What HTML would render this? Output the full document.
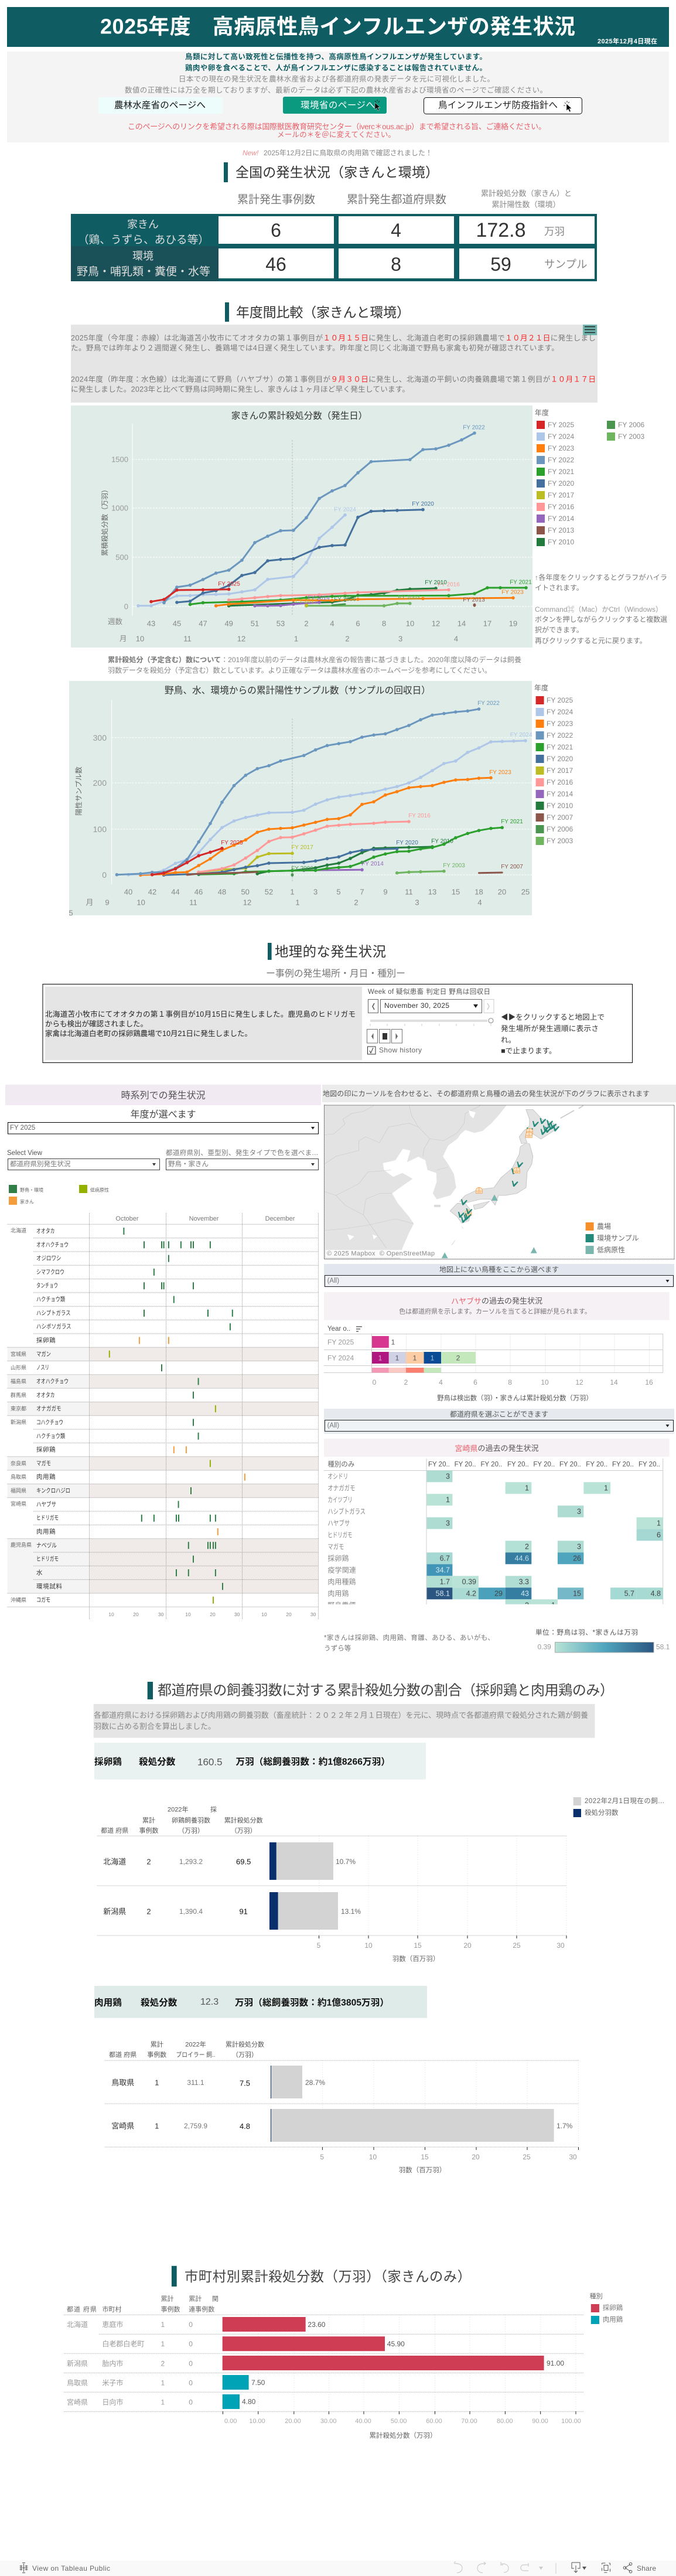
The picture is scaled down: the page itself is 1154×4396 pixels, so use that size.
<!DOCTYPE html>
<html lang="ja"><head><meta charset="utf-8"><title>2025年度 高病原性鳥インフルエンザの発生状況</title>
<style>
html,body{margin:0;padding:0;background:#fff}
svg{display:block}
text{font-family:"Liberation Sans","Noto Sans CJK JP",sans-serif;dominant-baseline:central;white-space:pre}
.m{text-anchor:middle}.e{text-anchor:end}.b{font-weight:700}
.l{fill:none;stroke-width:3;stroke-linejoin:round;stroke-linecap:round}
.grid{stroke:#fff;stroke-width:1;stroke-dasharray:3 2}
.dot{stroke:#999;stroke-width:1;stroke-dasharray:1 1;fill:none}
.lg{stroke:#ddd;stroke-width:1;stroke-dasharray:1 3;fill:none}
</style></head><body>
<svg xmlns="http://www.w3.org/2000/svg" width="1154" height="4396" viewBox="0 0 1154 4396">
<defs>
<marker id="r" markerUnits="userSpaceOnUse" markerWidth="8" markerHeight="8" refX="4" refY="4"><circle cx="4" cy="4" r="2.8" fill="#d62728"/></marker>
<marker id="lb" markerUnits="userSpaceOnUse" markerWidth="8" markerHeight="8" refX="4" refY="4"><circle cx="4" cy="4" r="2.8" fill="#aec7e8"/></marker>
<marker id="o" markerUnits="userSpaceOnUse" markerWidth="8" markerHeight="8" refX="4" refY="4"><circle cx="4" cy="4" r="2.8" fill="#ff7f0e"/></marker>
<marker id="bb" markerUnits="userSpaceOnUse" markerWidth="8" markerHeight="8" refX="4" refY="4"><circle cx="4" cy="4" r="2.8" fill="#6b97bf"/></marker>
<marker id="g" markerUnits="userSpaceOnUse" markerWidth="8" markerHeight="8" refX="4" refY="4"><circle cx="4" cy="4" r="2.8" fill="#2ca02c"/></marker>
<marker id="db" markerUnits="userSpaceOnUse" markerWidth="8" markerHeight="8" refX="4" refY="4"><circle cx="4" cy="4" r="2.8" fill="#44709d"/></marker>
<marker id="ol" markerUnits="userSpaceOnUse" markerWidth="8" markerHeight="8" refX="4" refY="4"><circle cx="4" cy="4" r="2.8" fill="#bcbd22"/></marker>
<marker id="p" markerUnits="userSpaceOnUse" markerWidth="8" markerHeight="8" refX="4" refY="4"><circle cx="4" cy="4" r="2.8" fill="#ff9896"/></marker>
<marker id="v" markerUnits="userSpaceOnUse" markerWidth="8" markerHeight="8" refX="4" refY="4"><circle cx="4" cy="4" r="2.8" fill="#9467bd"/></marker>
<marker id="dg" markerUnits="userSpaceOnUse" markerWidth="8" markerHeight="8" refX="4" refY="4"><circle cx="4" cy="4" r="2.8" fill="#237a3d"/></marker>
<marker id="lg" markerUnits="userSpaceOnUse" markerWidth="8" markerHeight="8" refX="4" refY="4"><circle cx="4" cy="4" r="2.8" fill="#6fb55f"/></marker>
<path id="bird" fill="#22897a" d="M-12,-16 L-7,-16 L-2,3 L12,-13 L16,-9 L-1,14 L-6,14Z"/>
<path id="barn" fill="#fbe3c8" stroke="#f28e2b" stroke-width="1.6" d="M-14,14V-2A14,14 0 0 1 14,-2V14ZM-14,3H14M-8,9H8M0,-15V3"/>
<path id="cur" fill="#000" stroke="#fff" stroke-width=".5" d="M0,0V12L3,9.2L5.2,14L7.2,13L5,8.4H9Z"/>
<clipPath id="heat"><rect x="553" y="2489" width="590" height="248.7"/></clipPath>
<clipPath id="bar3"><rect x="553" y="2276" width="590" height="66.5"/></clipPath>
<clipPath id="mapc"><rect x="9" y="139" width="1528" height="787"/></clipPath>
<linearGradient id="grad"><stop offset="0" stop-color="#b8e3d6"/><stop offset=".5" stop-color="#50a5be"/><stop offset="1" stop-color="#2b5681"/></linearGradient>
</defs>

<!-- HEADER -->
<rect x="12" y="12" width="1130" height="68" fill="#0f5c63"/>
<text x="171" y="45" font-size="36" font-weight="700" fill="#fff" textLength="811">2025年度　高病原性鳥インフルエンザの発生状況</text>
<text x="1020" y="71" font-size="11" font-weight="700" fill="#fff" textLength="102">2025年12月4日現在</text>

<rect x="12" y="88" width="1130" height="155" fill="#f4f4f4"/>
<g font-size="12.5">
<text x="316" y="97" class="b" fill="#0f5c63" textLength="515">鳥類に対して高い致死性と伝播性を持つ、高病原性鳥インフルエンザが発生しています。</text>
<text x="316" y="116" class="b" fill="#0f5c63" textLength="515">鶏肉や卵を食べることで、人が鳥インフルエンザに感染することは報告されていません。</text>
<text x="305" y="135" fill="#8a8a8a" textLength="539">日本での現在の発生状況を農林水産省および各都道府県の発表データを元に可視化しました。</text>
<text x="213" y="154" fill="#8a8a8a" textLength="721">数値の正確性には万全を期しておりますが、最新のデータは必ず下記の農林水産省および環境省のページでご確認ください。</text>
</g>
<rect x="168" y="166" width="213" height="28" rx="3" fill="#ecfdfb"/>
<text x="195" y="180" font-size="15.5" fill="#111" textLength="156">農林水産省のページへ</text>
<rect x="483" y="165" width="177" height="29" rx="3" fill="#0a9a80"/>
<text x="513" y="180" font-size="15.5" fill="#fff" textLength="127">環境省のページへ</text>
<use href="#cur" x="640" y="175"/>
<path d="M640,172l2,3M644,170v3M648,172l-2,3" stroke="#111" stroke-width=".8" fill="none"/>
<rect x="723.5" y="166.5" width="270" height="28" rx="4" fill="#fff" stroke="#111"/>
<text x="748" y="180" font-size="15.5" fill="#222" textLength="204">鳥インフルエンザ防疫指針へ</text>
<use href="#cur" x="967" y="177"/>
<path d="M964,175l2,2M968,172v3M962,180h3M972,174l-2,2" stroke="#111" stroke-width=".8" fill="none"/>
<text x="218" y="216" font-size="13" fill="#e8606a" textLength="714">このページへのリンクを希望される際は国際獣医教育研究センター（iverc＊ous.ac.jp）まで希望される旨、ご連絡ください。</text>
<text x="473" y="230" font-size="12.6" fill="#e8606a" textLength="202">メールの＊を＠に変えてください。</text>
<text x="414" y="261" font-size="12" fill="#f08a90" font-style="italic">New!</text>
<text x="450" y="261" font-size="12" fill="#888" textLength="288">2025年12月2日に鳥取県の肉用鶏で確認されました！</text>

<!-- NATIONAL -->
<rect x="382" y="277" width="7" height="34" fill="#0f5c63"/>
<text x="402" y="294" font-size="23" fill="#333" textLength="347">全国の発生状況（家きんと環境）</text>
<text x="405" y="341" font-size="19" fill="#777" textLength="133">累計発生事例数</text>
<text x="592" y="341" font-size="19" fill="#777" textLength="170">累計発生都道府県数</text>
<text x="821" y="330" font-size="13" fill="#888" textLength="155">累計殺処分数（家きん）と</text>
<text x="898" y="349" class="m" font-size="13" fill="#888">累計陽性数（環境）</text>
<rect x="121" y="365" width="898" height="115" fill="#0f5c63"/>
<rect x="121" y="420" width="252" height="60" fill="#1a5158"/>
<g fill="#fff">
<rect x="373" y="369" width="197" height="47"/><rect x="578" y="369" width="197" height="47"/><rect x="784" y="369" width="231" height="47"/>
<rect x="373" y="424" width="197" height="51"/><rect x="578" y="424" width="197" height="51"/><rect x="784" y="424" width="231" height="52"/>
</g>
<g fill="#ddd" class="m" font-size="18">
<text x="244" y="383" class="m">家きん</text>
<text x="245" y="409" class="m" font-size="18.7">（鶏、うずら、あひる等）</text>
<text x="244" y="437" class="m">環境</text>
<text x="245" y="464" class="m" font-size="19">野鳥・哺乳類・糞便・水等</text>
</g>
<g fill="#333" font-size="32">
<text x="471" y="393" class="m">6</text><text x="676" y="393" class="m">4</text>
<text x="855" y="393" class="m" font-size="34">172.8</text>
<text x="471" y="451" class="m">46</text><text x="676" y="451" class="m">8</text><text x="855" y="451" class="m">59</text>
</g>
<text x="929" y="395" font-size="17.5" fill="#888">万羽</text>
<text x="929" y="451" font-size="18.5" fill="#888">サンプル</text>

<!-- YEAR COMPARE -->
<rect x="384" y="516" width="7" height="33" fill="#0f5c63"/>
<text x="403" y="533" font-size="23" fill="#333" textLength="297">年度間比較（家きんと環境）</text>
<rect x="121" y="554" width="899" height="133" fill="#e5e5e5"/>
<rect x="995" y="554" width="24" height="18" fill="#6fb5ae"/>
<path d="M998,557.5h18M998,562.5h18M998,567.5h18" stroke="#222" stroke-width="1.6"/>
<g font-size="12.6" fill="#7a7a7a">
<text x="121" y="577" textLength="896">2025年度（今年度：赤線）は北海道苫小牧市にてオオタカの第１事例目が<tspan fill="#f22">１０月１５日</tspan>に発生し、北海道白老町の採卵鶏農場で<tspan fill="#f22">１０月２１日</tspan>に発生しまし</text>
<text x="121" y="594" textLength="833">た。野鳥では昨年より２週間遅く発生し、養鶏場では4日遅く発生しています。昨年度と同じく北海道で野鳥も家禽も初発が確認されています。</text>
<text x="121" y="647.5" textLength="896">2024年度（昨年度：水色線）は北海道にて野鳥（ハヤブサ）の第１事例目が<tspan fill="#f22">９月３０日</tspan>に発生し、北海道の平飼いの肉養鶏農場で第１例目が<tspan fill="#f22">１０月１７日</tspan></text>
<text x="121" y="664.5" textLength="578">に発生しました。2023年と比べて野鳥は同時期に発生し、家きんは１ヶ月ほど早く発生しています。</text>
</g>

<!-- CHART 1 -->
<rect x="121" y="692" width="788" height="413" fill="#dfece8"/>
<text x="511" y="710" class="m" font-size="15.5" fill="#333">家きんの累計殺処分数（発生日）</text>
<path d="M226,723V1051" stroke="#fff"/>
<path class="grid" d="M226,784H909M226,867H909M226,951H909"/>
<path class="grid" stroke-dasharray="1 2" d="M226,1035H909"/>
<path d="M499,751V1051" stroke="#bbb" stroke-dasharray="3 2"/>
<g font-size="13" fill="#999" class="e">
<text x="219" y="784" class="e">1500</text><text x="219" y="867" class="e">1000</text><text x="219" y="951" class="e">500</text><text x="219" y="1035" class="e">0</text>
</g>
<text transform="translate(179,889) rotate(-90)" class="m" font-size="12" fill="#666">累積殺処分数（万羽）</text>
<g font-size="13" fill="#888">
<text x="184" y="1061" font-size="12.5">週数</text><text x="204" y="1090" font-size="12.5">月</text>
<text x="258" y="1064" class="m">43</text><text x="302" y="1064" class="m">45</text><text x="346.5" y="1064" class="m">47</text><text x="390.7" y="1064" class="m">49</text><text x="435" y="1064" class="m">51</text><text x="479" y="1064" class="m">53</text><text x="523" y="1064" class="m">2</text><text x="567" y="1064" class="m">4</text><text x="611" y="1064" class="m">6</text><text x="655.6" y="1064" class="m">8</text><text x="700" y="1064" class="m">10</text><text x="744" y="1064" class="m">12</text><text x="788" y="1064" class="m">14</text><text x="832" y="1064" class="m">17</text><text x="876" y="1064" class="m">19</text>
<text x="239" y="1090" class="m">10</text><text x="320" y="1090" class="m">11</text><text x="412" y="1090" class="m">12</text><text x="505.5" y="1090" class="m">1</text><text x="593" y="1090" class="m">2</text><text x="683.6" y="1090" class="m">3</text><text x="778.5" y="1090" class="m">4</text>
</g>
<polyline class="l" stroke="#6fb55f" style="marker:url(#lg)" points="523,1033.8 655.6,1033.8 678,1029.8 699.8,1029.8"/>
<polyline class="l" stroke="#4a9650" points="567,1033 589,1031"/>
<polyline class="l" stroke="#237a3d" style="marker:url(#dg)" points="390.7,1033.8 501,1029.8 567,1027.5 589,1024 611,1016 633.5,1014.8 655.6,1012 678,1007.3 699.8,1005.3 744,1004"/>
<polyline class="l" stroke="#2ca02c" style="marker:url(#g)" points="324.5,1031.4 346.5,1028.6 413,1026.7 479,1024 523,1020 545,1018.8 567,1017.6 589,1016.8 766,1016.4 810,1013 832,1003 854,1003 898,1003"/>
<polyline class="l" stroke="#ff9896" style="marker:url(#p)" points="390.7,1024 413,1022 435,1020 457,1018 479,1016.4 545,1015 589,1012.4 611,1011 766,1006.5"/>
<polyline class="l" stroke="#ff7f0e" style="marker:url(#o)" points="368.7,1033.8 390.7,1031 501,1024 567,1024.7 611,1022.7 722,1021.5 876,1020.3"/>
<polyline class="l" stroke="#9467bd" style="marker:url(#v)" points="435,1033.8 457,1033.8 479,1033.4 501,1031 545,1027.9"/>
<polyline class="l" stroke="#aec7e8" style="marker:url(#lb)" points="236,1033.8 258,1033.8 280,1026 302,1016.8 324.5,1016.4 346.5,1014.8 368.7,1014.4 390.7,1013.6 413,1010 435,1006.5 457,988.7 501,983.6 523,960 545,918.7 567,899.7 589,878.8"/>
<polyline class="l" stroke="#44709d" style="marker:url(#db)" points="302,1028 324.5,1026 346.5,1012 368.7,1008 390.7,999 413,982 435,977 457,957 479,954.7 501,953.5 545,934 567,931 589,930 611,882.8 633.5,872.5 655.6,871.7 678,871 722,869.7"/>
<polyline class="l" stroke="#6b97bf" style="marker:url(#bb)" points="280,1028.6 302,1002 324.5,998.6 346.5,989 368.7,978 390.7,973 413,956 435,926 457,915 479,905.7 501,905 523,883.5 545,850.7 567,837.7 589,828.6 611,806.8 633.5,787.8 699.8,784.3 722,767.3 744,766 766,759.8 788,750.7 810,739"/>
<polyline class="l" stroke="#d62728" style="marker:url(#r)" points="258,1026.7 280,1023 302,1007 346.5,1006.5 390.7,1005.7"/>
<circle cx="523" cy="1033" r="3" fill="#bcbd22"/><ellipse cx="810" cy="1032.6" rx="2.5" ry="3" fill="#8c564b"/>
<g font-size="10" class="m">
<text x="809" y="730" class="m" fill="#6b97bf">FY 2022</text><text x="722" y="860.6" class="m" fill="#44709d">FY 2020</text><text x="589" y="870" class="m" fill="#aec7e8">FY 2024</text><text x="391" y="997" class="m" fill="#d62728">FY 2025</text><text x="766" y="998" class="m" fill="#ff9896">FY 2016</text><text x="744" y="994.6" class="m" fill="#237a3d">FY 2010</text><text x="889" y="994" class="m" fill="#2ca02c">FY 2021</text><text x="875" y="1011" class="m" fill="#ff7f0e">FY 2023</text><text x="809" y="1024" class="m" fill="#8c564b">FY 2013</text><text x="698" y="1020" class="m" fill="#6fb55f">FY 2003</text><text x="544" y="1021" class="m" fill="#9467bd">FY 2014</text><text x="589" y="1023" class="m" fill="#4a9650">FY 2006</text><text x="523" y="1026" class="m" fill="#bcbd22">FY 2017</text>
</g>
<text x="913" y="704.4" font-size="12" fill="#666">年度</text>
<g fill="#d62728"><rect x="916" y="718" width="14" height="14"/></g><rect x="916" y="738" width="14" height="14" fill="#aec7e8"/><rect x="916" y="758" width="14" height="14" fill="#ff7f0e"/><rect x="916" y="778" width="14" height="14" fill="#6b97bf"/><rect x="916" y="798" width="14" height="14" fill="#2ca02c"/><rect x="916" y="818" width="14" height="14" fill="#44709d"/><rect x="916" y="838" width="14" height="14" fill="#bcbd22"/><rect x="916" y="858" width="14" height="14" fill="#ff9896"/><rect x="916" y="878" width="14" height="14" fill="#9467bd"/><rect x="916" y="898" width="14" height="14" fill="#8c564b"/><rect x="916" y="918" width="14" height="14" fill="#237a3d"/>
<rect x="1036" y="718" width="14" height="14" fill="#4a9650"/><rect x="1036" y="738" width="14" height="14" fill="#6fb55f"/>
<g font-size="12" fill="#888">
<text x="935" y="725">FY 2025</text><text x="935" y="745">FY 2024</text><text x="935" y="765">FY 2023</text><text x="935" y="785">FY 2022</text><text x="935" y="805">FY 2021</text><text x="935" y="825">FY 2020</text><text x="935" y="845">FY 2017</text><text x="935" y="865">FY 2016</text><text x="935" y="885">FY 2014</text><text x="935" y="905">FY 2013</text><text x="935" y="925">FY 2010</text>
<text x="1055" y="725">FY 2006</text><text x="1055" y="745">FY 2003</text>
<text x="913" y="985.6" fill="#777" textLength="226">↑各年度をクリックするとグラフがハイラ</text><text x="913" y="1003" fill="#777">イトされます。</text>
<text x="913" y="1040" fill="#999" textLength="218">Command⌘（Mac）かCtrl（Windows）</text>
<text x="913" y="1057" fill="#777" textLength="226">ボタンを押しながらクリックすると複数選</text><text x="913" y="1075" fill="#777">択ができます。</text><text x="913" y="1093.6" fill="#777">再びクリックすると元に戻ります。</text>
</g>
<text x="184" y="1126" font-size="12.2" fill="#888" textLength="706"><tspan class="b" fill="#777">累計殺処分（予定含む）数について</tspan>：2019年度以前のデータは農林水産省の報告書に基づきました。2020年度以降のデータは飼養</text>
<text x="184" y="1144" font-size="12.2" fill="#888" textLength="655">羽数データを殺処分（予定含む）数としています。より正確なデータは農林水産省のホームページを参考にしてください。</text>

<!-- CHART 2 -->
<rect x="118" y="1162" width="790" height="400" fill="#dfece8"/>
<text x="508" y="1179" class="m" font-size="15.7" fill="#333">野鳥、水、環境からの累計陽性サンプル数（サンプルの回収日）</text>
<path d="M190.6,1194V1509" stroke="#fff"/>
<path class="grid" d="M190.6,1258.7H908M190.6,1336H908M190.6,1415H908"/>
<path class="grid" stroke-dasharray="1 2" d="M190.6,1493H908"/>
<path d="M499,1226V1506" stroke="#bbb" stroke-dasharray="3 2"/>
<g font-size="14" fill="#999">
<text x="182" y="1259" class="e">300</text><text x="182" y="1336" class="e">200</text><text x="182" y="1415" class="e">100</text><text x="182" y="1493" class="e">0</text>
</g>
<text transform="translate(134.7,1350) rotate(-90)" class="m" font-size="12" fill="#666">陽性サンプル数</text>
<g font-size="13" fill="#888">
<text x="219" y="1522" class="m">40</text><text x="260" y="1522" class="m">42</text><text x="299.5" y="1522" class="m">44</text><text x="339" y="1522" class="m">46</text><text x="379" y="1522" class="m">48</text><text x="418.7" y="1522" class="m">50</text><text x="459" y="1522" class="m">52</text><text x="499" y="1522" class="m">1</text><text x="538.6" y="1522" class="m">3</text><text x="578" y="1522" class="m">5</text><text x="618" y="1522" class="m">7</text><text x="658" y="1522" class="m">9</text><text x="698" y="1522" class="m">11</text><text x="738" y="1522" class="m">13</text><text x="778" y="1522" class="m">15</text><text x="817.5" y="1522" class="m">18</text><text x="857" y="1522" class="m">20</text><text x="897" y="1522" class="m">25</text>
<text x="153" y="1540" class="m">月</text><text x="183" y="1540" class="m">9</text><text x="240.6" y="1540" class="m">10</text><text x="330" y="1540" class="m">11</text><text x="422" y="1540" class="m">12</text><text x="508" y="1540" class="m">1</text><text x="608" y="1540" class="m">2</text><text x="712" y="1540" class="m">3</text><text x="819" y="1540" class="m">4</text>
<text x="121" y="1558" class="m">5</text>
</g>
<polyline class="l" stroke="#8c564b" points="817.5,1489.7 857.2,1489"/>
<polyline class="l" stroke="#6fb55f" style="marker:url(#lg)" points="677.7,1489.7 698,1488.3 718,1487.7 757.9,1486.7"/>
<polyline class="l" stroke="#9467bd" style="marker:url(#v)" points="518.7,1485.3 618,1484.3"/>
<polyline class="l" stroke="#237a3d" style="marker:url(#dg)" points="439.3,1491 459,1486.7 499,1485.7 538.6,1481 558.5,1476.3 578.3,1473 598,1465 618,1455 638,1447.7 657.8,1447 698,1446 738,1445"/>
<polyline class="l" stroke="#2ca02c" style="marker:url(#g)" points="339.2,1492.3 399.5,1491 419.4,1487.7 459,1486.7 499,1485.7 538.6,1485.3 558.5,1482 578.3,1480.3 598,1478.7 618,1471.7 638,1462.7 657.8,1457.3 677.7,1453.3 698,1452.7 718,1448.7 738,1446.3 757.9,1440.7 777.8,1429.7 798.3,1422.3 817.5,1417.3 838,1413.7 857.2,1412.3"/>
<polyline class="l" stroke="#bcbd22" style="marker:url(#ol)" points="339.2,1488.3 379,1484 419.4,1481.7 439.3,1462.7 459,1456.7 499,1456.3"/>
<polyline class="l" stroke="#44709d" style="marker:url(#db)" points="279.6,1493.3 339.2,1491.3 379,1488.3 399.5,1484 419.4,1480 439.3,1477.3 459,1473 518.7,1471.7 538.6,1469.3 558.5,1465.3 578.3,1462.3 598,1455 618,1451 638,1449.7 677.7,1448.3"/>
<polyline class="l" stroke="#ff9896" style="marker:url(#p)" points="339.2,1488.3 379,1482.3 399.5,1476 419.4,1464.3 439.3,1451.3 459,1436 479,1429.3 499,1428.7 518.7,1423 538.6,1416.7 558.5,1410 578.3,1408.3 598,1406.7 638,1405 657.8,1403 698,1402"/>
<polyline class="l" stroke="#ff7f0e" style="marker:url(#o)" points="239.9,1493.3 279.6,1491.7 299.5,1489 319.3,1488.3 339.2,1477 359,1465.7 379,1451 399.5,1442.3 419.4,1433.3 439.3,1420.3 459,1415 479,1413.7 499,1412.7 518.7,1408 538.6,1403.3 558.5,1398.3 578.3,1397 598,1390.7 618,1372.7 638,1368.3 657.8,1356.7 677.7,1351 698,1344.3 718,1342.3 738,1340.7 757.9,1335 777.8,1331 798.3,1330.3 817.5,1328 838,1327.3"/>
<polyline class="l" stroke="#aec7e8" style="marker:url(#lb)" points="219.3,1492.7 259.7,1490.7 279.6,1485 299.5,1473.3 319.3,1466.7 339.2,1455 359,1432.7 379,1412.3 399.5,1401 419.4,1395 439.3,1391 459,1387 499,1386.3 518.7,1382.7 538.6,1372.3 558.5,1365 578.3,1360.3 598,1357.7 618,1354.3 638,1351.7 657.8,1346.7 677.7,1342.3 698,1336 718,1326.7 738,1315 757.9,1303 777.8,1298.7 798.3,1284 817.5,1276.3 838,1266 857.2,1265.3 877,1264.7 897,1264"/>
<polyline class="l" stroke="#6b97bf" style="marker:url(#bb)" points="199.4,1492.7 239.9,1491 259.7,1488.7 279.6,1488.3 299.5,1481.7 319.3,1466.7 339.2,1436.7 359,1405.3 379,1369 399.5,1340.7 419.4,1323 439.3,1311.7 459,1306.7 479,1298.7 518.7,1289.3 538.6,1279.7 558.5,1272.3 578.3,1269 598,1265.7 618,1258 638,1254.3 657.8,1252.3 677.7,1245 698,1238 718,1228.3 738,1220.3 757.9,1217.7 777.8,1215 798.3,1213.3 817.5,1210"/>
<polyline class="l" stroke="#d62728" style="marker:url(#r)" points="259.7,1492.7 279.6,1490 299.5,1482.7 319.3,1472 339.2,1460.3 359,1454.3 379,1447.7"/>
<polyline class="l" stroke="#8c564b" points="319.3,1493 339.2,1491 419.4,1489 439.3,1488"/>
<ellipse cx="499" cy="1493" rx="2.5" ry="3" fill="#4a9650"/>
<g font-size="10">
<text x="834" y="1200.7" class="m" fill="#6b97bf">FY 2022</text><text x="889.6" y="1254.7" class="m" fill="#aec7e8">FY 2024</text><text x="854" y="1318.7" class="m" fill="#ff7f0e">FY 2023</text><text x="716" y="1392.7" class="m" fill="#ff9896">FY 2016</text><text x="874" y="1402.7" class="m" fill="#2ca02c">FY 2021</text><text x="396" y="1438.7" class="m" fill="#d62728">FY 2025</text><text x="516" y="1446.7" class="m" fill="#bcbd22">FY 2017</text><text x="695" y="1438.7" class="m" fill="#44709d">FY 2020</text><text x="755" y="1436" class="m" fill="#237a3d">FY 2010</text><text x="636" y="1474.7" class="m" fill="#9467bd">FY 2014</text><text x="775" y="1477.7" class="m" fill="#6fb55f">FY 2003</text><text x="874" y="1479.7" class="m" fill="#8c564b">FY 2007</text><text x="516" y="1482.7" class="m" fill="#4a9650">FY 2006</text>
</g>
<text x="912" y="1174" font-size="12" fill="#666">年度</text>
<rect x="914.6" y="1188" width="14" height="14" fill="#d62728"/><rect x="914.6" y="1208" width="14" height="14" fill="#aec7e8"/><rect x="914.6" y="1228" width="14" height="14" fill="#ff7f0e"/><rect x="914.6" y="1248" width="14" height="14" fill="#6b97bf"/><rect x="914.6" y="1268" width="14" height="14" fill="#2ca02c"/><rect x="914.6" y="1288" width="14" height="14" fill="#44709d"/><rect x="914.6" y="1308" width="14" height="14" fill="#bcbd22"/><rect x="914.6" y="1328" width="14" height="14" fill="#ff9896"/><rect x="914.6" y="1348" width="14" height="14" fill="#9467bd"/><rect x="914.6" y="1368" width="14" height="14" fill="#237a3d"/><rect x="914.6" y="1388" width="14" height="14" fill="#8c564b"/><rect x="914.6" y="1408" width="14" height="14" fill="#4a9650"/><rect x="914.6" y="1428" width="14" height="14" fill="#6fb55f"/>
<g font-size="12" fill="#888">
<text x="933" y="1195">FY 2025</text><text x="933" y="1215">FY 2024</text><text x="933" y="1235">FY 2023</text><text x="933" y="1255">FY 2022</text><text x="933" y="1275">FY 2021</text><text x="933" y="1295">FY 2020</text><text x="933" y="1315">FY 2017</text><text x="933" y="1335">FY 2016</text><text x="933" y="1355">FY 2014</text><text x="933" y="1375">FY 2010</text><text x="933" y="1395">FY 2007</text><text x="933" y="1415">FY 2006</text><text x="933" y="1435">FY 2003</text>
</g>

<!-- GEO -->
<rect x="457" y="1609" width="6.6" height="29" fill="#0f5c63"/>
<text x="469" y="1624" font-size="23.5" fill="#333" textLength="190">地理的な発生状況</text>
<text x="454" y="1662" font-size="16" fill="#777" textLength="238">ー事例の発生場所・月日・種別ー</text>
<rect x="73" y="1679.5" width="1006.5" height="134" fill="#fff" stroke="#000"/>
<rect x="77" y="1684" width="541" height="125" fill="#e5e5e5"/>
<g font-size="12.5" fill="#222">
<text x="77" y="1731" textLength="530">北海道苫小牧市にてオオタカの第１事例目が10月15日に発生しました。鹿児島のヒドリガモ</text>
<text x="77" y="1747.7">からも検出が確認されました。</text>
<text x="77" y="1764" textLength="353">家禽は北海道白老町の採卵鶏農場で10月21日に発生しました。</text>
</g>
<text x="628" y="1693" font-size="11.5" fill="#555" textLength="209">Week of 疑似患畜 判定日 野鳥は回収日</text>
<rect x="628.5" y="1705.5" width="17" height="23" fill="#fff" stroke="#666"/><path d="M639,1712l-3,5.5l3,5.5" fill="none" stroke="#555" stroke-width="1.5"/>
<rect x="649.5" y="1705.5" width="173" height="23" fill="#fff" stroke="#666"/>
<text x="656" y="1716" font-size="12" fill="#333" textLength="111">November 30, 2025</text><path d="M808,1714h8l-4,6z" fill="#222"/>
<rect x="826" y="1705.5" width="17" height="23" fill="#fff" stroke="#ccc"/><path d="M832,1712l3,5.5l-3,5.5" fill="none" stroke="#ccc" stroke-width="1.5"/>
<rect x="632" y="1740" width="200" height="4" fill="#e0e0e0"/><circle cx="838" cy="1741.7" r="4" fill="#fff" stroke="#888"/>
<path d="M632,1747v4M661,1747v4M691,1747v4M720,1747v4M750,1747v4M779,1747v4M809,1747v4M838,1747v4" stroke="#ccc"/>
<rect x="626.5" y="1756.5" width="18" height="23.5" fill="#fff" stroke="#777"/><path d="M637.5,1763v11l-3.5,-5.5z" fill="#666"/>
<rect x="647.5" y="1756.5" width="18.5" height="23.5" fill="#fff" stroke="#777"/><rect x="653" y="1763" width="8" height="11" fill="#333"/>
<rect x="668.5" y="1756.5" width="18" height="23.5" fill="#fff" stroke="#777"/><path d="M675.5,1763v11l3.5,-5.5z" fill="#666"/>
<rect x="627.5" y="1786" width="13.5" height="13" fill="#fff" stroke="#333"/><path d="M631,1793l2,4l4,-9" fill="none" stroke="#333"/>
<text x="647" y="1792" font-size="12" fill="#666" textLength="73">Show history</text>
<g font-size="12.6" fill="#333">
<text x="855" y="1736" textLength="177">◀▶をクリックすると地図上で</text>
<text x="855" y="1755.7" textLength="167">発生場所が発生週順に表示さ</text>
<text x="855" y="1775">れ。</text>
<text x="855" y="1793.7">■で止まります。</text>
</g>

<!-- TIME SERIES -->
<rect x="9" y="1851" width="539" height="35" fill="#f1eaf2"/>
<text x="278.6" y="1870" class="m" font-size="16" fill="#555">時系列での発生状況</text>
<text x="278.6" y="1902.7" class="m" font-size="16" fill="#444">年度が選べます</text>
<rect x="13.5" y="1915.5" width="530" height="19.5" fill="#fff" stroke="#000"/>
<text x="17" y="1925" font-size="11.5" fill="#666">FY 2025</text><path d="M531,1923h6l-3,4.5z" fill="#222"/>
<text x="12" y="1968" font-size="11.5" fill="#555">Select View</text>
<text x="283" y="1968" font-size="11.5" fill="#777" textLength="260">都道府県別、亜型別、発生タイプで色を選べま...</text>
<rect x="13.5" y="1977.5" width="259" height="19" fill="#fff" stroke="#444"/>
<text x="17" y="1987" font-size="11.5" fill="#777">都道府県別発生状況</text><path d="M260,1985h6l-3,4.5z" fill="#333"/>
<rect x="283.5" y="1977.5" width="260" height="19" fill="#fff" stroke="#444"/>
<text x="287" y="1987" font-size="11.5" fill="#777">野鳥・家きん</text><path d="M531,1985h6l-3,4.5z" fill="#333"/>
<rect x="15" y="2022" width="14" height="14" fill="#2f7f47"/><text x="34" y="2031" font-size="8" fill="#666">野鳥・環境</text>
<rect x="135" y="2022" width="14" height="14" fill="#93b200"/><text x="154" y="2031" font-size="8" fill="#666">低病原性</text>
<rect x="15" y="2042" width="14" height="14" fill="#f59c3c"/><text x="34" y="2051" font-size="8" fill="#666">家きん</text>
<g fill="#f4f4f4"><rect x="12.5" y="2299.2" width="140" height="23.3"/><rect x="12.5" y="2345.8" width="140" height="23.3"/><rect x="12.5" y="2392.5" width="140" height="23.3"/><rect x="12.5" y="2485.7" width="140" height="23.3"/><rect x="12.5" y="2532.4" width="140" height="23.3"/><rect x="12.5" y="2625.7" width="140" height="93.3"/></g>
<g fill="#f0ebe9"><rect x="152.5" y="2299.2" width="391" height="23.3"/><rect x="152.5" y="2345.8" width="391" height="23.3"/><rect x="152.5" y="2392.5" width="391" height="23.3"/><rect x="152.5" y="2485.7" width="391" height="23.3"/><rect x="152.5" y="2532.4" width="391" height="23.3"/><rect x="152.5" y="2625.7" width="391" height="93.3"/></g>
<text x="217" y="2080" class="m" font-size="11" fill="#777">October</text><text x="348" y="2080" class="m" font-size="11" fill="#777">November</text><text x="478" y="2080" class="m" font-size="11" fill="#777">December</text>
<path class="dot" d="M152.5,2070V2763M283.6,2070V2763M413.6,2070V2763M543.6,2070V2763"/>
<path class="dot" d="M12.5,2089.3H543.6M57,2112.6H543.6M57,2135.9H543.6M57,2159.3H543.6M57,2182.6H543.6M57,2205.9H543.6M57,2229.2H543.6M57,2252.5H543.6M57,2275.9H543.6M12.5,2299.2H543.6M12.5,2322.5H543.6M12.5,2345.8H543.6M12.5,2369.1H543.6M12.5,2392.5H543.6M12.5,2415.8H543.6M57,2439.1H543.6M57,2462.4H543.6M12.5,2485.7H543.6M12.5,2509H543.6M12.5,2532.4H543.6M12.5,2555.7H543.6M57,2579H543.6M57,2602.3H543.6M12.5,2625.7H543.6M57,2649H543.6M57,2672.3H543.6M57,2695.6H543.6M12.5,2719H543.6M12.5,2742.3H543.6"/>
<g fill="#666" font-size="9">
<text x="18" y="2100">北海道</text><text x="18" y="2310.8">宮城県</text><text x="18" y="2334">山形県</text><text x="18" y="2357.5">福島県</text><text x="18" y="2380.8">群馬県</text><text x="18" y="2404">東京都</text><text x="18" y="2427">新潟県</text><text x="18" y="2497.4">奈良県</text><text x="18" y="2520.7">鳥取県</text><text x="18" y="2544">福岡県</text><text x="18" y="2566.5">宮崎県</text><text x="18" y="2636.5">鹿児島県</text><text x="18" y="2730.6">沖縄県</text>
</g>
<g fill="#333" font-size="10.5">
<text x="62" y="2101" textLength="31.5" lengthAdjust="spacingAndGlyphs">オオタカ</text>
<text x="62" y="2124.3" textLength="55" lengthAdjust="spacingAndGlyphs">オオハクチョウ</text>
<text x="62" y="2147.6" textLength="42.5" lengthAdjust="spacingAndGlyphs">オジロワシ</text>
<text x="62" y="2170.9" textLength="48" lengthAdjust="spacingAndGlyphs">シマフクロウ</text>
<text x="62" y="2194.2" textLength="37" lengthAdjust="spacingAndGlyphs">タンチョウ</text>
<text x="62" y="2217.6" textLength="49" lengthAdjust="spacingAndGlyphs">ハクチョウ類</text>
<text x="62" y="2240.9" textLength="58.5" lengthAdjust="spacingAndGlyphs">ハシブトガラス</text>
<text x="62" y="2264.2" textLength="59.6" lengthAdjust="spacingAndGlyphs">ハシボソガラス</text>
<text x="62" y="2287.5" textLength="32.5">採卵鶏</text>
<text x="62" y="2310.8" textLength="25" lengthAdjust="spacingAndGlyphs">マガン</text>
<text x="62" y="2334.2" textLength="22" lengthAdjust="spacingAndGlyphs">ノスリ</text>
<text x="62" y="2357.5" textLength="55" lengthAdjust="spacingAndGlyphs">オオハクチョウ</text>
<text x="62" y="2380.8" textLength="31.5" lengthAdjust="spacingAndGlyphs">オオタカ</text>
<text x="62" y="2404.1" textLength="42.5" lengthAdjust="spacingAndGlyphs">オナガガモ</text>
<text x="62" y="2427.4" textLength="46" lengthAdjust="spacingAndGlyphs">コハクチョウ</text>
<text x="62" y="2450.8" textLength="49" lengthAdjust="spacingAndGlyphs">ハクチョウ類</text>
<text x="62" y="2474.1" textLength="32.5">採卵鶏</text>
<text x="62" y="2497.4" textLength="25" lengthAdjust="spacingAndGlyphs">マガモ</text>
<text x="62" y="2520.7" textLength="32.5">肉用鶏</text>
<text x="62" y="2544" textLength="58" lengthAdjust="spacingAndGlyphs">キンクロハジロ</text>
<text x="62" y="2567.4" textLength="34" lengthAdjust="spacingAndGlyphs">ハヤブサ</text>
<text x="62" y="2590.7" textLength="38" lengthAdjust="spacingAndGlyphs">ヒドリガモ</text>
<text x="62" y="2614" textLength="32.5">肉用鶏</text>
<text x="62" y="2637.3" textLength="35" lengthAdjust="spacingAndGlyphs">ナベヅル</text>
<text x="62" y="2660.6" textLength="38" lengthAdjust="spacingAndGlyphs">ヒドリガモ</text>
<text x="62" y="2684">水</text>
<text x="62" y="2707.3" textLength="44">環境試料</text>
<text x="62" y="2730.6" textLength="24" lengthAdjust="spacingAndGlyphs">コガモ</text>
</g>
<path fill="none" stroke="#2f7f47" stroke-width="2" d="M211.4,2095v12M246,2118.3v12M276,2118.3v12M279.6,2118.3v12M287.9,2118.3v12M308.9,2118.3v12M326,2118.3v12M330,2118.3v12M358.9,2118.3v12M287.9,2141.6v12M262.9,2164.9v12M246,2188.2v12M276,2188.2v12M279.6,2188.2v12M330,2188.2v12M296.8,2211.6v12M246,2234.9v12M355,2234.9v12M396.8,2234.9v12M392.9,2258.2v12M276,2328.2v12M338.6,2351.5v12M330,2374.8v12M330,2421.4v12M338.6,2444.8v12M326,2538v12M304.6,2561.4v12M241.8,2584.7v12M262.9,2584.7v12M301,2584.7v12M305,2584.7v12M358.9,2584.7v12M367.9,2584.7v12M321.8,2631.3v12M355,2631.3v12M358.9,2631.3v12M364,2631.3v12M367.9,2631.3v12M330,2654.6v12M301,2678v12M321.8,2678v12M367.9,2678v12M380,2701.3v12"/>
<path fill="none" stroke="#f59c3c" stroke-width="2" d="M237.9,2281.5v12M287.9,2281.5v12M296.8,2468.1v12M317.9,2468.1v12M417.9,2514.7v12M371.8,2608v12"/>
<path fill="none" stroke="#93b200" stroke-width="2" d="M186.8,2304.8v12M367.9,2398.1v12M358.9,2491.4v12M364,2724.6v12"/>
<g font-size="8.5" fill="#888">
<text x="190" y="2755" class="m">10</text><text x="232" y="2755" class="m">20</text><text x="274.6" y="2755" class="m">30</text><text x="321" y="2755" class="m">10</text><text x="363" y="2755" class="m">20</text><text x="404.6" y="2755" class="m">30</text><text x="451" y="2755" class="m">10</text><text x="493" y="2755" class="m">20</text><text x="534.6" y="2755" class="m">30</text>
</g>

<!-- MAP -->
<rect x="550" y="1851" width="604" height="30" fill="#ebebeb"/>
<text x="551" y="1866.7" font-size="12" fill="#555" textLength="558">地図の印にカーソルを合わせると、その都道府県と鳥種の過去の発生状況が下のグラフに表示されます</text>
<g transform="translate(550,1840) scale(.391,.3333)">
<g clip-path="url(#mapc)">
<path fill="#e3e3e3" d="M9,139H805L770,190L740,230L700,270L665,280L625,265L605,285L590,310L550,345L527,400L550,440L575,490L585,560L560,600L500,620L483,590L500,530L498,485L460,470L450,420L420,402L370,430L385,370L352,362L320,420L265,435L270,470L310,505L350,485L395,515L340,560L305,590L330,640L380,710L400,745L380,790L350,870L340,926H9Z"/>
<path fill="#e3e3e3" stroke="#bbb" stroke-width="2" d="M890,160L920,160L960,210L1010,230L1030,250L1010,270L955,312L920,285L885,300L895,330L870,335L860,300L880,270L905,245L905,210Z"/>
<path fill="#e3e3e3" stroke="#bbb" stroke-width="2" d="M885,335L905,335L920,400L915,440L895,480L890,560L850,590L800,600L770,600L755,650L735,620L690,620L620,640L600,630L625,600L680,570L750,560L780,510L830,460L860,390L865,350Z"/>
<path fill="#e3e3e3" stroke="#bbb" stroke-width="2" d="M660,650L730,630L700,662L665,672Z"/>
<path fill="#e3e3e3" stroke="#bbb" stroke-width="2" d="M590,640L625,642L652,680L640,730L610,742L590,710L558,680Z"/>
<path d="M1040,205L1100,165M1120,155L1140,140" stroke="#ccc" stroke-width="5" fill="none"/>
<path d="M490,650h25v8h-25zM610,760l5,10M580,830l-15,25" stroke="#ccc" stroke-width="2" fill="#ddd"/>
<path fill="none" stroke="#ccc" stroke-width="2" d="M9,290L50,285L100,235L90,210L130,180L180,170L225,140M380,140L390,190L420,250L470,310L445,360L440,400M470,310L530,320L590,280L620,230L625,180L690,140M9,440L60,400L160,370L160,320L190,300L250,330L290,250L380,230L420,250M9,580L60,600L160,540L200,480L300,470M60,600L100,650L180,700L190,620L250,590L305,590M180,700L210,750L320,720L400,745M9,780L100,770L210,750L280,870M500,470L550,455"/>
<path fill="#fff" d="M640,165L670,175L660,205L645,190ZM110,800L140,810L120,830ZM220,800L240,810L225,825Z"/>
</g>
<use href="#bird" x="905" y="268"/><use href="#bird" x="930" y="235"/><use href="#bird" x="962" y="220"/><use href="#bird" x="992" y="230"/><use href="#bird" x="965" y="276"/><use href="#bird" x="985" y="265"/><use href="#bird" x="1000" y="250"/><use href="#bird" x="1020" y="258"/><use href="#bird" x="1008" y="245"/><use href="#bird" x="976" y="258"/>
<use href="#barn" x="905" y="272"/><use href="#barn" x="903" y="290"/>
<use href="#bird" x="862" y="443"/><use href="#bird" x="838" y="477"/><use href="#barn" x="849" y="472"/><use href="#bird" x="840" y="541"/>
<use href="#barn" x="685" y="575"/>
<use href="#bird" x="618" y="636"/><use href="#barn" x="638" y="690"/><use href="#bird" x="640" y="682"/><use href="#bird" x="605" y="700"/><use href="#bird" x="630" y="714"/><use href="#bird" x="618" y="726"/><use href="#bird" x="636" y="708"/>
<path fill="#7ab6ae" d="M752,595L767,627H738ZM535,892L549,922H521ZM924,865L938,896H910Z"/>
</g>
<rect x="553.5" y="1886" width="597.5" height="262.7" fill="none" stroke="#111" stroke-dasharray="1 1"/>
<rect x="556" y="2133" width="188" height="13" fill="#fff" opacity=".85"/>
<text x="558" y="2139.5" font-size="11" fill="#888" textLength="184">© 2025 Mapbox  © OpenStreetMap</text>
<rect x="999.6" y="2086" width="14" height="14" fill="#f58f2c"/><rect x="999.6" y="2106" width="14" height="14" fill="#22897a"/><rect x="999.6" y="2126" width="14" height="14" fill="#7ab6ae"/>
<g font-size="12" fill="#666"><text x="1019" y="2093">農場</text><text x="1019" y="2113">環境サンプル</text><text x="1019" y="2133">低病原性</text></g>

<rect x="553" y="2157" width="598" height="40" fill="#e2e6ef"/>
<text x="852" y="2166.7" class="m" font-size="12" fill="#555">地図上にない鳥種をここから選べます</text>
<rect x="554.5" y="2176.5" width="595" height="19" fill="#f0f1f6" stroke="#222"/>
<text x="558.6" y="2186" font-size="11.5" fill="#777">(All)</text><path d="M1136.5,2184h6l-3,4.5z" fill="#222"/>
<rect x="553" y="2205" width="589.6" height="47.7" fill="#f6f1f5"/>
<text x="848" y="2220" class="m" font-size="13" fill="#555"><tspan fill="#e8606a">ハヤブサ</tspan>の過去の発生状況</text>
<text x="845" y="2238.7" class="m" font-size="11" fill="#777">色は都道府県を示します。カーソルを当てると詳細が見られます。</text>
<text x="559" y="2268" font-size="11.5" fill="#555">Year o..</text>
<path d="M608,2264h10M608,2268h7M608,2272h4" stroke="#666" stroke-width="1.4"/>
<path d="M693.5,2276V2342M753,2276V2342M812,2276V2342M871,2276V2342M931,2276V2342M990,2276V2342M1049,2276V2342M1108.6,2276V2342" stroke="#eee"/>
<path d="M553,2276.5H1131.7M553,2303.5H1131.7M553,2330.5H1131.7M553,2342.5H1131.7M634.5,2276V2342.5M1131.7,2276V2342.5" stroke="#ccc"/>
<text x="559" y="2290.7" font-size="12" fill="#999">FY 2025</text><text x="559" y="2317.7" font-size="12" fill="#999">FY 2024</text>
<rect x="635" y="2280" width="28.8" height="20" fill="#d83790"/><text x="671" y="2290.5" class="m" font-size="12" fill="#555">1</text>
<rect x="635" y="2307" width="28.8" height="20" fill="#b01680"/><rect x="663.8" y="2307" width="29.2" height="20" fill="#d1d1e6"/><rect x="693" y="2307" width="30.6" height="20" fill="#fccda5"/><rect x="723.6" y="2307" width="29.4" height="20" fill="#0b4a94"/><rect x="753" y="2307" width="59" height="20" fill="#c4e8bc"/>
<g font-size="12" class="m"><text x="649" y="2317.5" class="m" fill="#e0b0d8">1</text><text x="678" y="2317.5" class="m" fill="#555">1</text><text x="708" y="2317.5" class="m" fill="#555">1</text><text x="738" y="2317.5" class="m" fill="#a8c4e0">1</text><text x="782" y="2317.5" class="m" fill="#555">2</text></g>
<g clip-path="url(#bar3)"><rect x="635" y="2334" width="28.8" height="20" fill="#f598b5"/><rect x="663.8" y="2334" width="29.2" height="20" fill="#fccac5"/><rect x="693" y="2334" width="30.6" height="20" fill="#fb7f6f"/><rect x="723.6" y="2334" width="29.4" height="20" fill="#c4e8bc"/></g>
<g font-size="12" fill="#999"><text x="639" y="2359" class="m">0</text><text x="693" y="2359" class="m">2</text><text x="752.5" y="2359" class="m">4</text><text x="811.5" y="2359" class="m">6</text><text x="870.6" y="2359" class="m">8</text><text x="930" y="2359" class="m">10</text><text x="989" y="2359" class="m">12</text><text x="1048" y="2359" class="m">14</text><text x="1108" y="2359" class="m">16</text></g>
<text x="879" y="2386.7" class="m" font-size="11.3" fill="#555">野鳥は検出数（羽）・家きんは累計殺処分数（万羽）</text>

<rect x="553" y="2404" width="598" height="42.7" fill="#e6eaee"/>
<text x="852" y="2413.3" class="m" font-size="12" fill="#555">都道府県を選ぶことができます</text>
<rect x="554.5" y="2423.5" width="595" height="19" fill="#f0f3f6" stroke="#222"/>
<text x="558.6" y="2433" font-size="11.5" fill="#777">(All)</text><path d="M1136.5,2431h6l-3,4.5z" fill="#222"/>
<rect x="553" y="2455" width="589.6" height="31" fill="#f6f1f5"/>
<text x="848" y="2471.3" class="m" font-size="13" fill="#555"><tspan fill="#e8606a">宮崎県</tspan>の過去の発生状況</text>
<text x="559.4" y="2499.7" font-size="11.5" fill="#666">種別のみ</text>
<g font-size="11.5" fill="#555"><text x="731" y="2499.7">FY 20..</text><text x="775.6" y="2499.7">FY 20..</text><text x="820.5" y="2499.7">FY 20..</text><text x="866" y="2499.7">FY 20..</text><text x="910.4" y="2499.7">FY 20..</text><text x="955" y="2499.7">FY 20..</text><text x="1000.3" y="2499.7">FY 20..</text><text x="1045" y="2499.7">FY 20..</text><text x="1090" y="2499.7">FY 20..</text></g>
<path d="M553,2509.5H1131.7M728,2489V2737.7M1131.7,2489V2737.7" stroke="#ccc"/>
<g clip-path="url(#heat)">
<rect x="728.6" y="2509.3" width="43.8" height="20" fill="#aedcd2"/>
<rect x="862.7" y="2529.3" width="44.6" height="20" fill="#b8e3d6"/><rect x="996.4" y="2529.3" width="45.7" height="20" fill="#b8e3d6"/>
<rect x="728.6" y="2549.3" width="43.8" height="20" fill="#b8e3d6"/>
<rect x="951.9" y="2569.3" width="44.5" height="20" fill="#aedcd2"/>
<rect x="728.6" y="2589.3" width="43.8" height="20" fill="#aedcd2"/><rect x="1086.7" y="2589.3" width="45" height="20" fill="#b8e3d6"/>
<rect x="1086.7" y="2609.3" width="45" height="20" fill="#a5d8d2"/>
<rect x="862.7" y="2629.3" width="44.6" height="20" fill="#b4e1d5"/><rect x="951.9" y="2629.3" width="44.5" height="20" fill="#aedcd2"/>
<rect x="728.6" y="2649.3" width="43.8" height="20" fill="#a5d8d2"/><rect x="862.7" y="2649.3" width="44.6" height="20" fill="#357ea2"/><rect x="951.9" y="2649.3" width="44.5" height="20" fill="#50a5be"/>
<rect x="728.6" y="2669.3" width="43.8" height="20" fill="#4196b8"/>
<rect x="728.6" y="2689.3" width="43.8" height="20" fill="#b2dfd4"/><rect x="772.4" y="2689.3" width="44.6" height="20" fill="#b8e3d6"/><rect x="862.7" y="2689.3" width="44.6" height="20" fill="#b0ddd4"/>
<rect x="728.6" y="2709.3" width="43.8" height="20" fill="#2b5681"/><rect x="772.4" y="2709.3" width="44.6" height="20" fill="#a9dad3"/><rect x="817" y="2709.3" width="45.7" height="20" fill="#4ba0bc"/><rect x="862.7" y="2709.3" width="44.6" height="20" fill="#357ea2"/><rect x="951.9" y="2709.3" width="44.5" height="20" fill="#75b8c8"/><rect x="1042.1" y="2709.3" width="44.6" height="20" fill="#a5d9d3"/><rect x="1086.7" y="2709.3" width="45" height="20" fill="#a7dad3"/>
<rect x="862.7" y="2729.3" width="44.6" height="20" fill="#b4e1d5"/><rect x="907.3" y="2729.3" width="44.6" height="20" fill="#b8e3d6"/>
<g font-size="12" fill="#888">
<text x="559.4" y="2519.3" textLength="35" lengthAdjust="spacingAndGlyphs">オシドリ</text>
<text x="559.4" y="2539.3" textLength="47" lengthAdjust="spacingAndGlyphs">オナガガモ</text>
<text x="559.4" y="2559.3" textLength="42.5" lengthAdjust="spacingAndGlyphs">カイツブリ</text>
<text x="559.4" y="2579.3" textLength="64.5" lengthAdjust="spacingAndGlyphs">ハシブトガラス</text>
<text x="559.4" y="2599.3" textLength="38" lengthAdjust="spacingAndGlyphs">ハヤブサ</text>
<text x="559.4" y="2619.3" textLength="42" lengthAdjust="spacingAndGlyphs">ヒドリガモ</text>
<text x="559.4" y="2639.3" textLength="28" lengthAdjust="spacingAndGlyphs">マガモ</text>
<text x="559.4" y="2659.3" textLength="36">採卵鶏</text>
<text x="559.4" y="2679.3" textLength="48.5">疫学関連</text>
<text x="559.4" y="2699.3" textLength="48">肉用種鶏</text>
<text x="559.4" y="2719.3" textLength="36">肉用鶏</text>
<text x="559.4" y="2739.3" textLength="48">野鳥糞便</text>
</g>
<g font-size="12.5" fill="#444">
<text x="768" y="2519.3" class="e">3</text>
<text x="903" y="2539.3" class="e">1</text><text x="1038" y="2539.3" class="e">1</text>
<text x="768" y="2559.3" class="e">1</text>
<text x="992" y="2579.3" class="e">3</text>
<text x="768" y="2599.3" class="e">3</text><text x="1128" y="2599.3" class="e">1</text>
<text x="1128" y="2619.3" class="e">6</text>
<text x="903" y="2639.3" class="e">2</text><text x="992" y="2639.3" class="e">3</text>
<text x="768" y="2659.3" class="e">6.7</text><text x="903" y="2659.3" class="e" fill="#c8e0ec">44.6</text><text x="992" y="2659.3" class="e">26</text>
<text x="768" y="2679.3" class="e" fill="#d4e8f0">34.7</text>
<text x="768" y="2699.3" class="e">1.7</text><text x="813" y="2699.3" class="e">0.39</text><text x="903" y="2699.3" class="e">3.3</text>
<text x="768" y="2719.3" class="e" fill="#d4e4f0">58.1</text><text x="813" y="2719.3" class="e">4.2</text><text x="858" y="2719.3" class="e">29</text><text x="903" y="2719.3" class="e" fill="#d4e8f0">43</text><text x="992" y="2719.3" class="e">15</text><text x="1083" y="2719.3" class="e">5.7</text><text x="1128" y="2719.3" class="e">4.8</text>
<text x="903" y="2739.3" class="e">2</text><text x="948" y="2739.3" class="e">1</text>
</g>
</g>
<text x="553" y="2795" font-size="11.6" fill="#777" textLength="291">*家きんは採卵鶏、肉用鶏、育雛、あひる、あいがも、</text>
<text x="553" y="2813" font-size="11.6" fill="#777">うずら等</text>
<text x="914" y="2786.7" font-size="11.5" fill="#555" textLength="175">単位：野鳥は羽、*家きんは万羽</text>
<rect x="947.5" y="2802.5" width="168.5" height="17.5" fill="url(#grad)" stroke="#aaa"/>
<text x="917.5" y="2810.7" font-size="12" fill="#999">0.39</text><text x="1120" y="2810.7" font-size="12" fill="#999">58.1</text>

<!-- RATIO SECTION -->
<rect x="251.7" y="2870" width="9.3" height="30" fill="#0f5c63"/>
<text x="269" y="2885" font-size="24" fill="#444" textLength="779">都道府県の飼養羽数に対する累計殺処分数の割合（採卵鶏と肉用鶏のみ）</text>
<rect x="159.7" y="2908" width="855.8" height="57.7" fill="#e5e5e5"/>
<text x="160" y="2927" font-size="13" fill="#888" textLength="844">各都道府県における採卵鶏および肉用鶏の飼養羽数（畜産統計：２０２２年２月１日現在）を元に、現時点で各都道府県で殺処分された鶏が飼養</text>
<text x="160" y="2946" font-size="13" fill="#888">羽数に占める割合を算出しました。</text>
<rect x="161" y="2974" width="566" height="62.8" fill="#e9f2f0"/>
<g font-size="15.6" class="b" fill="#111"><text x="161" y="3006.8" font-weight="700">採卵鶏</text><text x="237" y="3006.8" font-weight="700">殺処分数</text><text x="402.5" y="3006.8" font-weight="700" textLength="263.5">万羽（総飼養羽数：約1億8266万羽）</text></g>
<text x="337" y="3006.8" font-size="17" fill="#555">160.5</text>
<rect x="978.7" y="3067" width="13.3" height="14" fill="#d3d3d3"/><rect x="978.7" y="3087" width="13.3" height="14" fill="#0a2f6d"/>
<text x="998" y="3074" font-size="11.5" fill="#666" textLength="136">2022年2月1日現在の飼...</text><text x="998" y="3094" font-size="11.5" fill="#666">殺処分羽数</text>
<g font-size="11" fill="#555">
<text x="286" y="3088.6">2022年</text><text x="359" y="3088.6">採</text>
<text x="254" y="3106.8" class="m">累計</text><text x="326" y="3106.8" class="m">卵鶏飼養羽数</text><text x="415.7" y="3106.8" class="m">累計殺処分数</text>
<text x="195.7" y="3124.6" class="m">都道 府県</text><text x="254" y="3124.6" class="m">事例数</text><text x="326" y="3124.6" class="m">（万羽）</text><text x="415.7" y="3124.6" class="m">（万羽）</text>
</g>
<path class="lg" d="M544.5,3133V3303M629,3133V3303M713,3133V3303M798,3133V3303M882,3133V3303M967,3133V3303"/>
<path d="M165.6,3133H967M165.6,3218H967M165.6,3303H967" stroke="#aaa" stroke-dasharray="1 1" fill="none"/>
<path d="M544.5,3303v5M629,3303v5M713,3303v5M798,3303v5M882,3303v5M967,3303v5" stroke="#222"/>
<rect x="460" y="3144" width="109" height="64" fill="#d3d3d3"/><rect x="460" y="3144" width="11.7" height="64" fill="#0a2f6d"/>
<rect x="460" y="3229" width="117" height="64" fill="#d3d3d3"/><rect x="460" y="3229" width="14.6" height="64" fill="#0a2f6d"/>
<g font-size="13" fill="#333"><text x="195.7" y="3177" class="m">北海道</text><text x="254" y="3177" class="m">2</text><text x="326" y="3177" class="m" fill="#777" font-size="12">1,293.2</text><text x="415.7" y="3177" class="m" fill="#111">69.5</text><text x="573" y="3176.8" font-size="12" fill="#666">10.7%</text>
<text x="195.7" y="3262" class="m">新潟県</text><text x="254" y="3262" class="m">2</text><text x="326" y="3262" class="m" fill="#777" font-size="12">1,390.4</text><text x="415.7" y="3262" class="m" fill="#111">91</text><text x="582" y="3261.8" font-size="12" fill="#666">13.1%</text></g>
<g font-size="12" fill="#999"><text x="544" y="3320" class="m">5</text><text x="629" y="3320" class="m">10</text><text x="713" y="3320" class="m">15</text><text x="798" y="3320" class="m">20</text><text x="882" y="3320" class="m">25</text><text x="957" y="3320" class="m">30</text></g>
<text x="710" y="3343.6" class="m" font-size="11.5" fill="#666">羽数（百万羽）</text>

<rect x="161" y="3389" width="568" height="54.7" fill="#deebe8"/>
<g font-size="15.6" fill="#111"><text x="161" y="3418" font-weight="700">肉用鶏</text><text x="240" y="3418" font-weight="700">殺処分数</text><text x="401" y="3418" font-weight="700" textLength="263">万羽（総飼養羽数：約1億3805万羽）</text></g>
<text x="342" y="3416.7" font-size="16" fill="#555">12.3</text>
<g font-size="11" fill="#555">
<text x="267.8" y="3489.3" class="m">累計</text><text x="334" y="3489.3" class="m">2022年</text><text x="418" y="3489.3" class="m">累計殺処分数</text>
<text x="209.7" y="3507" class="m">都道 府県</text><text x="267.8" y="3507" class="m">事例数</text><text x="334" y="3507" class="m" textLength="67" lengthAdjust="spacingAndGlyphs">ブロイラー 飼..</text><text x="418" y="3507" class="m">（万羽）</text>
</g>
<path class="lg" d="M550.4,3516V3664M638,3516V3664M725.5,3516V3664M813,3516V3664M900,3516V3664M987.5,3516V3664"/>
<path d="M178.8,3516.3H987.5M178.8,3590H987.5M178.8,3664H987.5" stroke="#aaa" stroke-dasharray="1 1" fill="none"/>
<path d="M550.4,3664v5M638,3664v5M725.5,3664v5M813,3664v5M900,3664v5M987.5,3664v5" stroke="#222"/>
<rect x="462" y="3525" width="54" height="56" fill="#d3d3d3"/><rect x="462" y="3525" width="1" height="56" fill="#0a2f6d"/>
<rect x="462" y="3599" width="483.6" height="56" fill="#d3d3d3"/><rect x="462" y="3599" width="1" height="56" fill="#0a2f6d"/>
<g font-size="13" fill="#333"><text x="209.7" y="3554" class="m">鳥取県</text><text x="267.8" y="3554" class="m">1</text><text x="334" y="3554" class="m" font-size="12" fill="#777">311.1</text><text x="418" y="3555" class="m" fill="#111">7.5</text><text x="521" y="3554" font-size="12" fill="#666">28.7%</text>
<text x="209.7" y="3628" class="m">宮崎県</text><text x="267.8" y="3628" class="m">1</text><text x="334" y="3628" class="m" font-size="12" fill="#777">2,759.9</text><text x="418" y="3628.5" class="m" fill="#111">4.8</text><text x="950" y="3628" font-size="12" fill="#666">1.7%</text></g>
<g font-size="12" fill="#999"><text x="549.7" y="3681" class="m">5</text><text x="636.5" y="3681" class="m">10</text><text x="725" y="3681" class="m">15</text><text x="812" y="3681" class="m">20</text><text x="899" y="3681" class="m">25</text><text x="978" y="3681" class="m">30</text></g>
<text x="721" y="3704" class="m" font-size="11.5" fill="#666">羽数（百万羽）</text>

<!-- MUNICIPAL -->
<rect x="292.9" y="3866.8" width="8.8" height="35.2" fill="#0f5c63"/>
<text x="315" y="3885" font-size="23.3" fill="#444" textLength="489">市町村別累計殺処分数（万羽）（家きんのみ）</text>
<g font-size="11" fill="#666"><text x="274.5" y="3923.6">累計</text><text x="322.3" y="3923.6">累計</text><text x="362" y="3923.6">関</text>
<text x="114" y="3941.7" textLength="51">都道 府県</text><text x="174.4" y="3941.7">市町村</text><text x="274.5" y="3941.7">事例数</text><text x="322.3" y="3941.7">連事例数</text></g>
<text x="1006.6" y="3918.8" font-size="11" fill="#666">種別</text>
<rect x="1008.8" y="3932" width="14.2" height="14" fill="#cf3d54"/><rect x="1008.8" y="3952" width="14.2" height="14" fill="#00a2b5"/>
<text x="1028.7" y="3939" font-size="11.5" fill="#777">採卵鶏</text><text x="1028.7" y="3959" font-size="11.5" fill="#777">肉用鶏</text>
<path class="lg" d="M440.8,3950V4115M501.8,3950V4115M561.4,3950V4115M621,3950V4115M681.4,3950V4115M742.5,3950V4115M802,3950V4115M862.4,3950V4115M922.7,3950V4115M983,3950V4115"/>
<path d="M108.9,3950.3H997M169,3983.4H997M108.9,4016.2H997M108.9,4049.4H997M108.9,4082.2H997M108.9,4115.4H997" stroke="#aaa" stroke-dasharray="1 1" fill="none"/>
<path d="M380.4,4115v5M440.8,4115v5M501.8,4115v5M561.4,4115v5M621,4115v5M681.4,4115v5M742.5,4115v5M802,4115v5M862.4,4115v5M922.7,4115v5M983,4115v5" stroke="#222"/>
<rect x="379.7" y="3954" width="142" height="25" fill="#cf3d54"/><rect x="379.7" y="3987.2" width="277.3" height="25" fill="#cf3d54"/><rect x="379.7" y="4020" width="548.9" height="25" fill="#cf3d54"/><rect x="379.7" y="4053" width="44.9" height="25" fill="#00a2b5"/><rect x="379.7" y="4086" width="29.3" height="25" fill="#00a2b5"/>
<g font-size="12" fill="#555"><text x="525.4" y="3967">23.60</text><text x="660.8" y="4000">45.90</text><text x="933" y="4033">91.00</text><text x="429" y="4066">7.50</text><text x="413" y="4098.6">4.80</text></g>
<g font-size="12" fill="#999">
<text x="114" y="3967">北海道</text><text x="174.4" y="3967">恵庭市</text><text x="274.5" y="3967">1</text><text x="322.3" y="3967">0</text>
<text x="174.4" y="4000">白老郡白老町</text><text x="274.5" y="4000">1</text><text x="322.3" y="4000">0</text>
<text x="114" y="4033.7">新潟県</text><text x="174.4" y="4033.7">胎内市</text><text x="274.5" y="4033.7">2</text><text x="322.3" y="4033.7">0</text>
<text x="114" y="4066.6">鳥取県</text><text x="174.4" y="4066.6">米子市</text><text x="274.5" y="4066.6">1</text><text x="322.3" y="4066.6">0</text>
<text x="114" y="4099.6">宮崎県</text><text x="174.4" y="4099.6">日向市</text><text x="274.5" y="4099.6">1</text><text x="322.3" y="4099.6">0</text>
</g>
<g font-size="11" fill="#aaa"><text x="393.7" y="4131.8" class="m">0.00</text><text x="439" y="4131.8" class="m">10.00</text><text x="500" y="4131.8" class="m">20.00</text><text x="560.7" y="4131.8" class="m">30.00</text><text x="620" y="4131.8" class="m">40.00</text><text x="680.6" y="4131.8" class="m">50.00</text><text x="741" y="4131.8" class="m">60.00</text><text x="801" y="4131.8" class="m">70.00</text><text x="861.7" y="4131.8" class="m">80.00</text><text x="922" y="4131.8" class="m">90.00</text><text x="975" y="4131.8" class="m">100.00</text></g>
<text x="688" y="4156.8" class="m" font-size="11.5" fill="#666">累計殺処分数（万羽）</text>

<!-- TOOLBAR -->
<rect x="0" y="4369.4" width="1154" height="26.6" fill="#f9f9f9"/>
<path d="M40.5,4375v14M33.5,4382h14M36,4377.5v9M45,4377.5v9M33.5,4379h5M42.5,4379h5M33.5,4385h5M42.5,4385h5M38,4373.5h5M38,4390.5h5" stroke="#555" stroke-width="1" fill="none"/>
<text x="55" y="4383" font-size="12" fill="#666" textLength="133">View on Tableau Public</text>
<g fill="none" stroke="#ccc" stroke-width="1.2">
<path d="M775,4373l3,-1.5M775,4374.5c10,0 14,3 14,8c0,5 -4,8 -9,8"/>
<path d="M829,4374.5c-10,0 -14,3 -14,8c0,5 4,8 9,8M826,4372l3,2.5l-3,2.5"/>
<path d="M855,4372v5h4M856,4375c9,0 12,3 12,8c0,5 -4,7 -8,7"/>
<path d="M902,4377h-8c-3,0 -5,2 -5,5c0,3 2,5 5,5h8M902,4374v6"/>
</g>
<path d="M920,4380h7l-3.5,5.5z" fill="#ccc"/>
<path d="M949,4374v18" stroke="#ccc"/>
<g fill="none" stroke="#555" stroke-width="1">
<path d="M976,4373h14v10h-4M980,4383h-4v-10M983,4378v12M980,4387l3,3l3,-3"/>
<rect x="1027.5" y="4374" width="14" height="16" rx="1" stroke-dasharray="5 6"/><rect x="1031" y="4377.5" width="7" height="9"/>
<path d="M1067,4382l9,-6M1067,4382l9,6"/><circle cx="1066.5" cy="4382" r="2.3"/><circle cx="1076.5" cy="4375.5" r="2.3"/><circle cx="1076.5" cy="4388.5" r="2.3"/>
</g>
<path d="M994,4380h7l-3.5,5.5z" fill="#555"/>
<text x="1087" y="4383" font-size="12" fill="#666" textLength="33">Share</text>
</svg>
</body></html>
